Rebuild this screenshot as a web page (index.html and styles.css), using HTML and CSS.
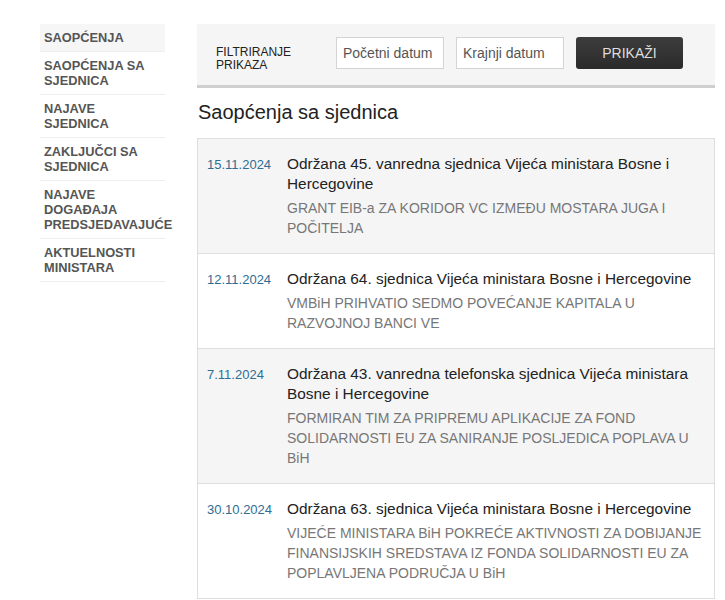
FILE: index.html
```html
<!DOCTYPE html>
<html lang="bs">
<head>
<meta charset="utf-8">
<title>Saopćenja sa sjednica</title>
<link rel="stylesheet" href="styles.css">
</head>
<body>
<div class="page">
  <nav class="sidebar">
    <ul class="side-menu">
      <li class="side-item active"><a href="#">SAOPĆENJA</a></li>
      <li class="side-item"><a href="#">SAOPĆENJA SA SJEDNICA</a></li>
      <li class="side-item"><a href="#">NAJAVE SJEDNICA</a></li>
      <li class="side-item"><a href="#">ZAKLJUČCI SA SJEDNICA</a></li>
      <li class="side-item"><a href="#">NAJAVE DOGAĐAJA PREDSJEDAVAJUĆE</a></li>
      <li class="side-item"><a href="#">AKTUELNOSTI MINISTARA</a></li>
    </ul>
  </nav>
  <main class="main">
    <form class="filter">
      <div class="filter-label">FILTRIRANJE<br>PRIKAZA</div>
      <input class="date-input" type="text" placeholder="Početni datum">
      <input class="date-input" type="text" placeholder="Krajnji datum">
      <button class="show-btn" type="button">PRIKAŽI</button>
    </form>
    <h1 class="page-title">Saopćenja sa sjednica</h1>
    <ul class="news">
      <li class="news-item shaded">
        <span class="news-date">15.11.2024</span>
        <div class="news-body">
          <a class="news-title" href="#">Održana 45. vanredna sjednica Vijeća ministara Bosne i Hercegovine</a>
          <p class="news-sub">GRANT EIB-a ZA KORIDOR VC IZMEĐU MOSTARA JUGA I POČITELJA</p>
        </div>
      </li>
      <li class="news-item">
        <span class="news-date">12.11.2024</span>
        <div class="news-body">
          <a class="news-title" href="#">Održana 64. sjednica Vijeća ministara Bosne i Hercegovine</a>
          <p class="news-sub">VMBiH PRIHVATIO SEDMO POVEĆANJE KAPITALA U RAZVOJNOJ BANCI VE</p>
        </div>
      </li>
      <li class="news-item shaded">
        <span class="news-date">7.11.2024</span>
        <div class="news-body">
          <a class="news-title" href="#">Održana 43. vanredna telefonska sjednica Vijeća ministara Bosne i Hercegovine</a>
          <p class="news-sub">FORMIRAN TIM ZA PRIPREMU APLIKACIJE ZA FOND SOLIDARNOSTI EU ZA SANIRANJE POSLJEDICA POPLAVA U BiH</p>
        </div>
      </li>
      <li class="news-item">
        <span class="news-date">30.10.2024</span>
        <div class="news-body">
          <a class="news-title" href="#">Održana 63. sjednica Vijeća ministara Bosne i Hercegovine</a>
          <p class="news-sub">VIJEĆE MINISTARA BiH POKREĆE AKTIVNOSTI ZA DOBIJANJE FINANSIJSKIH SREDSTAVA IZ FONDA SOLIDARNOSTI EU ZA POPLAVLJENA PODRUČJA U BiH</p>
        </div>
      </li>
    </ul>
  </main>
</div>
</body>
</html>
```

FILE: styles.css
```css
* { box-sizing: border-box; }
html, body { margin: 0; padding: 0; background: #fff; }
body {
  font-family: "Liberation Sans", Arial, sans-serif;
  color: #222;
}
.page {
  display: flex;
  align-items: flex-start;
  padding: 24px 10px 0 40px;
}
.sidebar {
  width: 125px;
  flex: none;
}
.side-menu {
  list-style: none;
  margin: 0;
  padding: 0;
}
.side-item {
  border-bottom: 1px solid #eeeeee;
  padding: 6px 17px 6px 4px;
  font-size: 12.8px;
  line-height: 15px;
}
.side-item.active { background: #f6f6f6; }
.side-item a {
  color: #555;
  font-weight: bold;
  text-decoration: none;
}
.main {
  width: 518px;
  margin-left: 32px;
  flex: none;
}
.filter {
  display: flex;
  align-items: center;
  gap: 12px;
  background: #f5f5f5;
  border-bottom: 3px solid #cfcfcf;
  height: 64px;
  padding: 0 0 3px 19px;
  margin: 0;
}
.filter-label {
  width: 108px;
  font-size: 12px;
  line-height: 13px;
  color: #222;
  padding-top: 12px;
}
.date-input {
  width: 108px;
  height: 32px;
  border: 1px solid #d4d4d4;
  background: #fff;
  font-family: inherit;
  font-size: 14px;
  padding: 0 6px;
  color: #555;
  outline: none;
}
.date-input::placeholder { color: #555; }
.show-btn {
  width: 107px;
  height: 32px;
  border: 0;
  border-radius: 3px;
  background: linear-gradient(#3d3d3d, #2a2a2a);
  color: #dedede;
  font-family: inherit;
  font-size: 14px;
  cursor: pointer;
}
.page-title {
  font-size: 20px;
  font-weight: normal;
  color: #222;
  margin: 12px 0 14px 1px;
  line-height: 24px;
}
.news {
  list-style: none;
  margin: 0;
  padding: 0;
  border: 1px solid #dedede;
}
.news-item {
  display: flex;
  padding: 15px 10px 15px 9px;
  border-top: 1px solid #dedede;
  background: #fff;
}
.news-item:first-child { border-top: 0; }
.news-item.shaded { background: #f5f5f5; }
.news-date {
  width: 80px;
  flex: none;
  font-size: 13px;
  line-height: 20px;
  color: #2e6d94;
  padding-top: 1px;
}
.news-body { flex: 1; min-width: 0; }
.news-title {
  display: block;
  font-size: 15.4px;
  line-height: 20px;
  color: #222;
  text-decoration: none;
  margin-bottom: 4px;
}
.news-sub {
  margin: 0;
  font-size: 14px;
  line-height: 20px;
  color: #777;
}
```
